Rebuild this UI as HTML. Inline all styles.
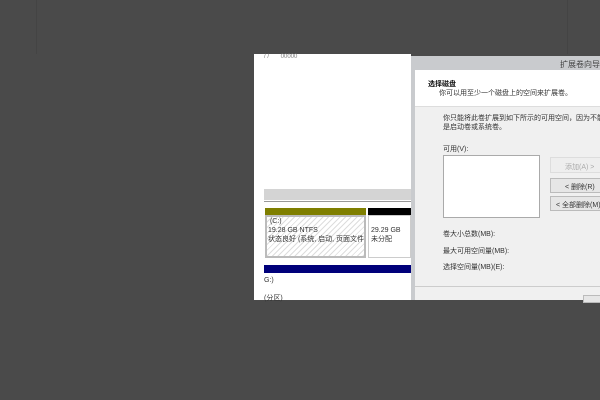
<!DOCTYPE html>
<html><head><meta charset="utf-8"><style>
*{margin:0;padding:0;box-sizing:border-box}
body{width:600px;height:400px;background:#4a4a4a;position:relative;overflow:hidden;font-family:"Liberation Sans","Noto Sans CJK SC",sans-serif;font-size:7px;color:#333}
.a{position:absolute;white-space:nowrap}
</style></head><body>
<div class="a" style="left:36px;top:0;width:1px;height:54px;background:#444"></div>
<div class="a" style="left:567px;top:0;width:1px;height:54px;background:#444"></div>
<div class="a" style="left:254px;top:54px;width:157px;height:246px;background:#fff"></div>
<div class="a" style="left:264px;top:54px;font-size:6px;color:#777">/ / &nbsp; &nbsp; &nbsp; 00000</div>
<div class="a" style="left:264px;top:189px;width:147px;height:11px;background:#d4d4d4"></div>
<div class="a" style="left:264px;top:201px;width:147px;height:1px;background:#999"></div>
<div class="a" style="left:265px;top:208px;width:101px;height:7px;background:#7f7f00"></div>
<div class="a" style="left:368px;top:208px;width:43px;height:7px;background:#000"></div>
<div class="a" style="left:265px;top:215px;width:101px;height:43px;border:2px solid #bbb;background:repeating-linear-gradient(135deg,#fff 0 3px,#ddd 3px 4px)"></div>
<div class="a" style="left:268px;top:217px;line-height:9px;font-size:7px;color:#333">&nbsp;(C:)<br>19.28 GB NTFS<br>状态良好 (系统, 启动, 页面文件</div>
<div class="a" style="left:368px;top:215px;width:43px;height:43px;border:1px solid #ccc;background:#fff"></div>
<div class="a" style="left:371px;top:226px;line-height:9px;color:#333">29.29 GB<br>未分配</div>
<div class="a" style="left:264px;top:265px;width:147px;height:8px;background:#00007a"></div>
<div class="a" style="left:264px;top:277px">G:)</div>
<div class="a" style="left:264px;top:293px">(分区)</div>
<div class="a" style="left:411px;top:56px;width:189px;height:244px;background:#c9cbce"></div>
<div class="a" style="left:560px;top:59px;font-size:8px;color:#444">扩展卷向导</div>
<div class="a" style="left:415px;top:70px;width:185px;height:230px;background:#f0f0f0"></div>
<div class="a" style="left:415px;top:70px;width:185px;height:37px;background:#fff;border-bottom:1px solid #ddd"></div>
<div class="a" style="left:428px;top:79px;font-weight:bold;font-size:7px;color:#111">选择磁盘</div>
<div class="a" style="left:439px;top:88px;color:#333">你可以用至少一个磁盘上的空间来扩展卷。</div>
<div class="a" style="left:443px;top:114px;line-height:9px;color:#333">你只能将此卷扩展到如下所示的可用空间，因为不能<br>是启动卷或系统卷。</div>
<div class="a" style="left:443px;top:144px">可用(V):</div>
<div class="a" style="left:443px;top:155px;width:97px;height:63px;background:#fff;border:1px solid #aaa"></div>
<div class="a" style="left:550px;top:157px;width:52px;height:16px;background:#eee;border:1px solid #ddd;color:#aaa;padding:4px 0 0 14px">添加(A) &gt;</div>
<div class="a" style="left:550px;top:178px;width:52px;height:15px;background:#e6e6e6;border:1px solid #bbb;padding:3px 0 0 14px">&lt; 删除(R)</div>
<div class="a" style="left:550px;top:196px;width:52px;height:15px;background:#e6e6e6;border:1px solid #bbb;padding:3px 0 0 5px">&lt; 全部删除(M)</div>
<div class="a" style="left:443px;top:229px">卷大小总数(MB):</div>
<div class="a" style="left:443px;top:246px">最大可用空间量(MB):</div>
<div class="a" style="left:443px;top:262px">选择空间量(MB)(E):</div>
<div class="a" style="left:415px;top:286px;width:185px;height:1px;background:#ccc"></div>
<div class="a" style="left:583px;top:295px;width:20px;height:8px;background:#e6e6e6;border:1px solid #bbb"></div>
</body></html>
